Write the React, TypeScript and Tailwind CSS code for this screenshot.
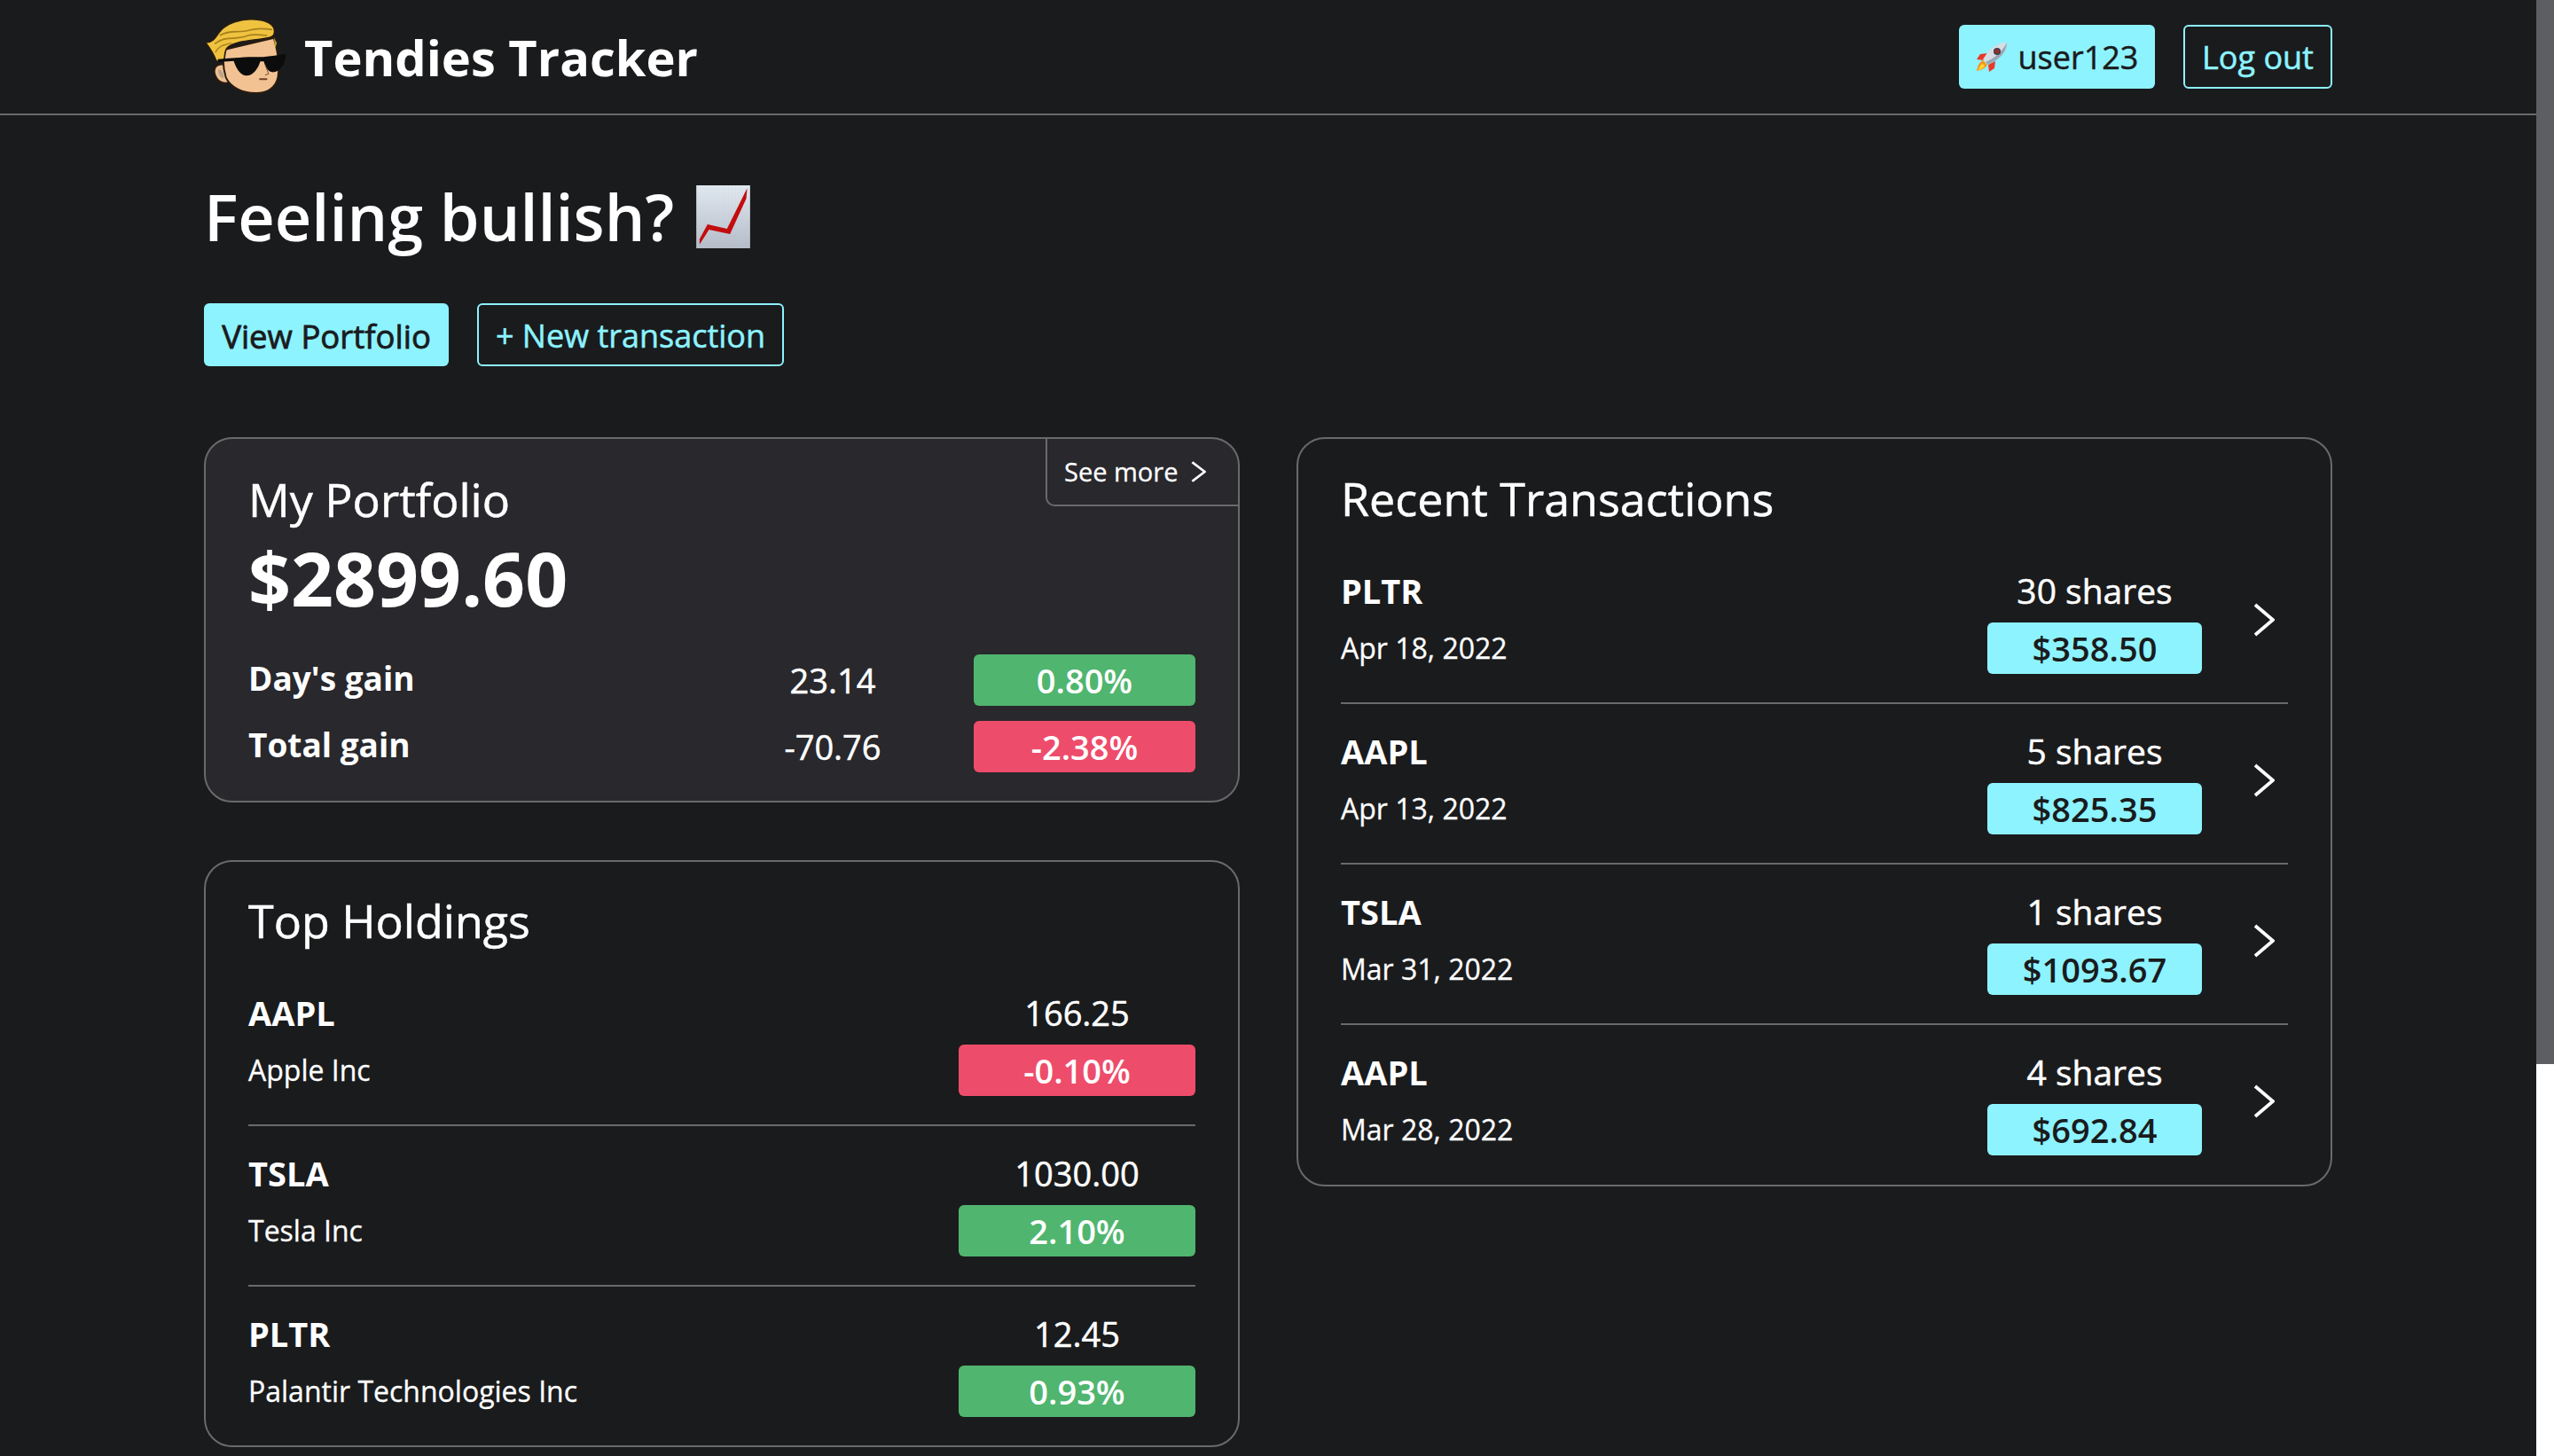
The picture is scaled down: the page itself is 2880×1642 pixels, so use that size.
const font = { fontFamily: '"Open Sans", sans-serif' };

function WsbLogo() {
  return (
    <svg width="92" height="85" viewBox="35 35 275 255" className="shrink-0">
      {/* ear */}
      <path d="M100 190 C72 185 60 205 70 228 C78 250 100 258 118 250 Z" fill="#f0bf90" stroke="#2a1c10" strokeWidth="6" />
      <path d="M80 208 C90 205 100 220 98 236 C88 236 78 222 80 208 Z" fill="#b9a48e" />
      {/* face */}
      <path d="M100 140 L268 100 C280 140 288 190 282 232 C276 268 245 288 205 287 C160 286 122 268 106 235 C96 205 95 170 100 140 Z" fill="#f2c293" stroke="#2a1c10" strokeWidth="6" />
      {/* hair */}
      <path d="M36 115 C60 118 70 100 82 82 C105 50 160 34 205 38 C245 40 270 55 270 78 C272 100 250 100 225 104 C185 110 135 112 112 132 C100 142 104 158 100 172 C94 180 80 184 72 176 C66 160 58 142 36 115 Z" fill="#efc33f" stroke="#2a1c10" strokeWidth="5" strokeLinejoin="round" />
      <path d="M85 92 C120 70 150 85 185 74 C205 68 235 68 262 72" fill="none" stroke="#a77f1c" strokeWidth="5" />
      <path d="M68 120 C105 90 140 110 180 92 C200 86 225 90 245 92" fill="none" stroke="#a77f1c" strokeWidth="5" />
      <path d="M70 150 C82 125 105 122 125 118" fill="none" stroke="#a77f1c" strokeWidth="4" />
      <path d="M268 98 L278 118 L272 135 Z" fill="#c99e2c" />
      {/* sunglasses */}
      <path d="M78 172 L136 168 C165 164 200 164 232 165 C255 162 285 158 308 155 C308 175 298 212 268 216 C250 218 240 202 234 180 L222 180 C214 205 198 230 172 228 C150 224 138 195 132 178 L80 182 Z" fill="#0c0c0c" />
      {/* nose and mouth */}
      <path d="M238 190 L250 222 L238 226" fill="none" stroke="#7a5232" strokeWidth="3" />
      <rect x="218" y="237" width="28" height="6" rx="3" fill="#6b4128" />
    </svg>
  );
}

function RocketIcon() {
  return (
    <svg width="36" height="34" viewBox="0 0 36 34" className="shrink-0">
      <path d="M13 13 L5 14 L1 20 L9 21 Z" fill="#e8392a" />
      <path d="M22 22 L21 30 L15 34 L14 26 Z" fill="#e8392a" />
      <path d="M8 21 C4 23 2 27 1 33 C6 32 11 30 13 26 Z" fill="#f39a1f" />
      <path d="M7 25 C5 27 4 29 3 32 C6 31 9 29 10 27 Z" fill="#ffd83b" />
      <path d="M35 1 C27 1 19 5 14 11 L8 20 L14 26 L24 20 C31 15 35 8 35 1 Z" fill="#d5dde5" />
      <path d="M35 1 C35 8 31 15 24 20 L14 26 L11 23 C21 19 30 11 35 1 Z" fill="#9aa6b4" />
      <circle cx="24" cy="11" r="4" fill="#3a4149" />
      <circle cx="24" cy="11" r="2.4" fill="#a52b24" />
    </svg>
  );
}

function ChartIcon() {
  return (
    <svg width="61" height="71" viewBox="44 40 182 213" className="shrink-0">
      <defs>
        <linearGradient id="sheet" x1="0" y1="0" x2="0" y2="1">
          <stop offset="0" stopColor="#e3ebf2" />
          <stop offset="1" stopColor="#b6bdc9" />
        </linearGradient>
        <pattern id="grid" width="8" height="8" patternUnits="userSpaceOnUse">
          <path d="M8 0 H0 V8" fill="none" stroke="#a9b6c6" strokeWidth="1" />
        </pattern>
      </defs>
      <rect x="44" y="40" width="182" height="213" fill="url(#sheet)" />
      <rect x="44" y="40" width="182" height="213" fill="url(#grid)" opacity="0.6" />
      <path d="M216 50 L213 85 L158 205 L87 190 L55 240 L55 222 L82 172 L148 187 Z" fill="#c20d0d" />
    </svg>
  );
}

function Chevron({ small }: { small?: boolean }) {
  return (
    <svg width={small ? 17 : 24} height={small ? 24 : 38} viewBox="0 0 24 38" preserveAspectRatio="none" className="shrink-0">
      <path d="M2 2 L22 19 L2 36" fill="none" stroke="#ffffff" strokeWidth={small ? 4 : 3.8} />
    </svg>
  );
}

function Gain({ value, up, className }: { value: string; up: boolean; className: string }) {
  return (
    <div className={`flex items-center justify-center rounded-[6px] text-[38px] font-semibold text-white ${up ? "bg-[#50b56f]" : "bg-[#ee4c6b]"} ${className}`}>
      {value}
    </div>
  );
}

function GainRow({ label, value, pct, up }: { label: string; value: string; pct: string; up: boolean }) {
  return (
    <div className="flex items-center">
      <div className="-mt-[4px] flex-1 text-[37px] font-bold text-white">{label}</div>
      <div className="w-[200px] text-center text-[38px] text-white [-webkit-text-stroke:0.5px_currentColor]">{value}</div>
      <Gain value={pct} up={up} className="ml-[59px] h-[58px] w-[250px]" />
    </div>
  );
}

const holdings = [
  { symbol: "AAPL", name: "Apple Inc", price: "166.25", pct: "-0.10%", up: false },
  { symbol: "TSLA", name: "Tesla Inc", price: "1030.00", pct: "2.10%", up: true },
  { symbol: "PLTR", name: "Palantir Technologies Inc", price: "12.45", pct: "0.93%", up: true },
];

const transactions = [
  { symbol: "PLTR", date: "Apr 18, 2022", shares: "30 shares", total: "$358.50" },
  { symbol: "AAPL", date: "Apr 13, 2022", shares: "5 shares", total: "$825.35" },
  { symbol: "TSLA", date: "Mar 31, 2022", shares: "1 shares", total: "$1093.67" },
  { symbol: "AAPL", date: "Mar 28, 2022", shares: "4 shares", total: "$692.84" },
];

export default function App() {
  return (
    <div className="flex h-[1642px] w-[2880px] overflow-hidden bg-[#1a1b1d] text-white" style={font}>
      <div className="w-[2860px] shrink-0">
        <nav className="h-[130px] border-b-2 border-[#6a6a6a]">
          <div className="mx-auto flex h-full w-[2400px] items-center">
            <div className="ml-[1px] mr-[20px] -mt-[2px]">
              <WsbLogo />
            </div>
            <span className="text-[56px] font-bold leading-none">Tendies Tracker</span>
            <div className="ml-auto flex gap-[32px]">
              <div className="flex h-[72px] w-[221px] items-center justify-center gap-[12px] rounded-[6px] bg-[#8df3ff] pt-[2px] text-[36px] text-[#1a1b1d] [-webkit-text-stroke:0.5px_currentColor]">
                <div className="-mt-[2px]">
                  <RocketIcon />
                </div>
                <span>user123</span>
              </div>
              <div className="flex h-[72px] w-[168px] items-center justify-center rounded-[6px] border-2 border-[#8df3ff] pt-[2px] text-[36px] text-[#8df3ff] [-webkit-text-stroke:0.5px_currentColor]">
                Log out
              </div>
            </div>
          </div>
        </nav>

        <main className="mx-auto w-[2400px]">
          <div className="mt-[59px] flex h-[110px] items-center gap-[25px]">
            <h1 className="text-[72px] font-semibold leading-none">Feeling bullish?</h1>
            <ChartIcon />
          </div>
          <div className="mt-[43px] flex gap-[32px]">
            <button className="flex h-[71px] w-[276px] items-center justify-center rounded-[6px] bg-[#8df3ff] pt-[3px] text-[36.5px] text-[#1a1b1d] [-webkit-text-stroke:0.8px_currentColor]">
              View Portfolio
            </button>
            <button className="flex h-[71px] w-[346px] items-center justify-center rounded-[6px] border-2 border-[#8df3ff] pt-[3px] text-[36px] text-[#8df3ff] [-webkit-text-stroke:0.5px_currentColor]">
              + New transaction
            </button>
          </div>

          <div className="mt-[80px] grid grid-cols-[1168px_1168px] gap-x-[64px]">
            <div className="flex flex-col gap-[65px]">
              <section className="relative rounded-[32px] border-2 border-[#6a6a6a] bg-[#28282d] px-[48px] pb-[32px] pt-[32px]">
                <div className="absolute right-0 top-0 flex h-[76px] w-[217px] items-center gap-[15px] rounded-bl-[10px] border-b-2 border-l-2 border-[#6a6a6a] pl-[19px]">
                  <span className="text-[29px] [-webkit-text-stroke:0.3px_currentColor]">See more</span>
                  <Chevron small />
                </div>
                <h2 className="text-[52px] leading-[72px] [-webkit-text-stroke:0.5px_currentColor]">My Portfolio</h2>
                <div className="text-[84px] font-bold leading-[106px]">$2899.60</div>
                <div className="mt-[33px] flex flex-col gap-[17px]">
                  <GainRow label="Day's gain" value="23.14" pct="0.80%" up />
                  <GainRow label="Total gain" value="-70.76" pct="-2.38%" up={false} />
                </div>
              </section>

              <section className="rounded-[32px] border-2 border-[#6a6a6a] px-[48px] pb-[32px] pt-[32px]">
                <h2 className="text-[52px] leading-[68px] [-webkit-text-stroke:0.5px_currentColor]">Top Holdings</h2>
                <div className="mt-[17px]">
                  {holdings.map((h, i) => (
                    <div key={h.symbol} className={`flex justify-between pt-[27px] ${i < holdings.length - 1 ? "border-b-2 border-[#6a6a6a] pb-[32px]" : ""}`}>
                      <div>
                        <div className="-mt-[1px] text-[38px] font-bold leading-[54px]">{h.symbol}</div>
                        <div className="mt-[9px] flex h-[58px] items-center text-[32px] [-webkit-text-stroke:0.3px_currentColor]">{h.name}</div>
                      </div>
                      <div className="w-[267px] text-center">
                        <div className="-mt-[1px] text-[38px] leading-[54px] [-webkit-text-stroke:0.5px_currentColor]">{h.price}</div>
                        <Gain value={h.pct} up={h.up} className="mt-[9px] h-[58px] w-[267px]" />
                      </div>
                    </div>
                  ))}
                </div>
              </section>
            </div>

            <section className="self-start rounded-[32px] border-2 border-[#6a6a6a] px-[48px] pb-[33px] pt-[32px]">
              <h2 className="text-[52px] leading-[70px] [-webkit-text-stroke:0.5px_currentColor]">Recent Transactions</h2>
              <div className="mt-[16px]">
                {transactions.map((t, i) => (
                  <div key={t.date} className={`flex items-center pt-[27px] ${i < transactions.length - 1 ? "border-b-2 border-[#6a6a6a] pb-[32px]" : ""}`}>
                    <div className="flex-1">
                      <div className="-mt-[1px] text-[38px] font-bold leading-[54px]">{t.symbol}</div>
                      <div className="mt-[9px] flex h-[58px] items-center text-[32px] [-webkit-text-stroke:0.3px_currentColor]">{t.date}</div>
                    </div>
                    <div className="w-[242px] text-center">
                      <div className="-mt-[1px] text-[39px] leading-[54px] [-webkit-text-stroke:0.5px_currentColor]">{t.shares}</div>
                      <div className="mt-[9px] flex h-[58px] items-center justify-center rounded-[6px] bg-[#8df3ff] text-[38px] font-semibold text-[#1a1b1d]">
                        {t.total}
                      </div>
                    </div>
                    <div className="-mt-[2px] ml-[58px] mr-[15px]">
                      <Chevron />
                    </div>
                  </div>
                ))}
              </div>
            </section>
          </div>
        </main>
      </div>

      <div className="w-[20px] shrink-0 bg-white">
        <div className="h-[1200px] bg-[#5d5d64]" />
      </div>
    </div>
  );
}
